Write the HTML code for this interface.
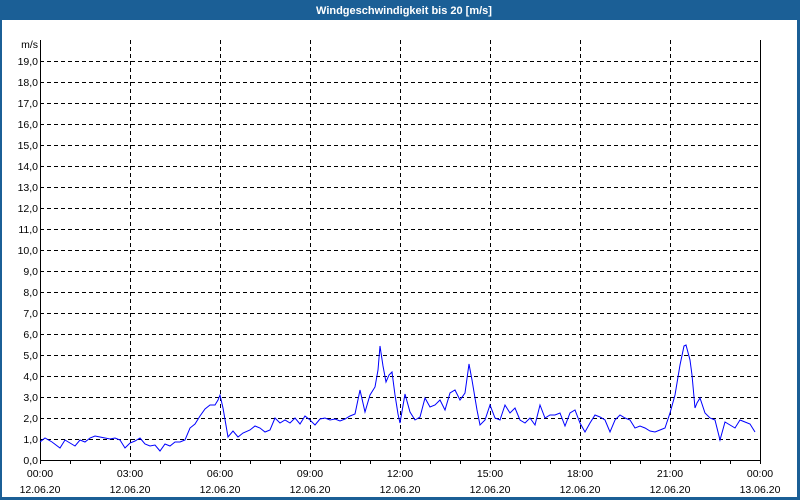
<!DOCTYPE html>
<html><head><meta charset="utf-8"><style>
html,body{margin:0;padding:0;background:#fff;}
body{width:800px;height:500px;overflow:hidden;position:relative;font-family:"Liberation Sans",sans-serif;}
</style></head><body>
<svg width="800" height="500" xmlns="http://www.w3.org/2000/svg" style="position:absolute;left:0;top:0" font-family="Liberation Sans, sans-serif" font-size="10.5">
<rect x="0" y="0" width="800" height="500" fill="#fff"/>
<rect x="0" y="0" width="800" height="20" fill="#1b5f96"/>
<rect x="0" y="0" width="2" height="500" fill="#1b5f96"/>
<rect x="797" y="0" width="3" height="500" fill="#1b5f96"/>
<rect x="0" y="497" width="800" height="3" fill="#1b5f96"/>
<text x="404" y="14" fill="#fff" font-weight="bold" font-size="11" text-anchor="middle">Windgeschwindigkeit bis 20 [m/s]</text>
<g stroke="#000" stroke-width="1" stroke-dasharray="4,3" shape-rendering="crispEdges">
<path d="M40 61.5H760M40 82.5H760M40 103.5H760M40 124.5H760M40 145.5H760M40 166.5H760M40 187.5H760M40 208.5H760M40 229.5H760M40 250.5H760M40 271.5H760M40 292.5H760M40 313.5H760M40 334.5H760M40 355.5H760M40 376.5H760M40 397.5H760M40 418.5H760M40 439.5H760"/>
<path d="M130.5 40V460M220.5 40V460M310.5 40V460M400.5 40V460M490.5 40V460M580.5 40V460M670.5 40V460"/>
</g>
<g stroke="#000" stroke-width="1" fill="none" shape-rendering="crispEdges">
<path d="M40.5 40V460.5H760.5V40"/>
<path d="M40.5 460V464M70.5 460V464M100.5 460V464M130.5 460V464M160.5 460V464M190.5 460V464M220.5 460V464M250.5 460V464M280.5 460V464M310.5 460V464M340.5 460V464M370.5 460V464M400.5 460V464M430.5 460V464M460.5 460V464M490.5 460V464M520.5 460V464M550.5 460V464M580.5 460V464M610.5 460V464M640.5 460V464M670.5 460V464M700.5 460V464M730.5 460V464M760.5 460V464"/>
</g>
<g fill="#000" text-anchor="end">
<text x="38" y="48">m/s</text>
<text x="38" y="65">19,0</text><text x="38" y="86">18,0</text><text x="38" y="107">17,0</text><text x="38" y="128">16,0</text><text x="38" y="149">15,0</text><text x="38" y="170">14,0</text><text x="38" y="191">13,0</text><text x="38" y="212">12,0</text><text x="38" y="233">11,0</text><text x="38" y="254">10,0</text><text x="38" y="275">9,0</text><text x="38" y="296">8,0</text><text x="38" y="317">7,0</text><text x="38" y="338">6,0</text><text x="38" y="359">5,0</text><text x="38" y="380">4,0</text><text x="38" y="401">3,0</text><text x="38" y="422">2,0</text><text x="38" y="443">1,0</text><text x="38" y="464">0,0</text>
</g>
<g fill="#000" text-anchor="middle">
<text x="40" y="477">00:00</text><text x="40" y="493">12.06.20</text>
<text x="130" y="477">03:00</text><text x="130" y="493">12.06.20</text>
<text x="220" y="477">06:00</text><text x="220" y="493">12.06.20</text>
<text x="310" y="477">09:00</text><text x="310" y="493">12.06.20</text>
<text x="400" y="477">12:00</text><text x="400" y="493">12.06.20</text>
<text x="490" y="477">15:00</text><text x="490" y="493">12.06.20</text>
<text x="580" y="477">18:00</text><text x="580" y="493">12.06.20</text>
<text x="670" y="477">21:00</text><text x="670" y="493">12.06.20</text>
<text x="760" y="477">00:00</text><text x="760" y="493">13.06.20</text>
</g>
<polyline fill="none" stroke="#0000ff" stroke-width="1" points="40,442 45,438 52,442 60,448 65,440 70,443 75,446 80,440 85,442 90,438 95,436 100,437 105,438 110,439 115,438 120,440 125,448 130,443 135,441 140,438 145,444 150,446 155,445 160,451 165,444 170,446 175,442 180,442 185,440 190,428 195,424 200,416 205,409 210,405 215,405 218,400 220,395 223,408 228,437 233,431 238,437 243,433 250,430 255,426 260,428 265,432 270,430 275,418 280,423 285,420 290,423 295,418 300,424 305,416 310,420 315,425 320,419 325,418 330,420 335,419 340,421 345,419 350,416 355,414 360,390 365,412 370,395 375,387 378,370 380,346 383,366 386,382 389,375 392,372 395,395 398,414 400,423 405,394 410,412 415,420 420,417 425,398 430,407 435,405 440,400 445,410 450,393 455,390 460,400 465,393 469,364 472,380 477,410 480,425 485,420 490,405 495,418 500,420 505,405 510,413 515,408 520,420 525,423 530,418 535,425 540,405 545,418 550,415 555,415 560,413 565,426 570,413 575,410 580,423 585,432 590,423 595,415 600,417 605,420 610,432 615,420 620,415 625,418 630,420 635,428 640,426 645,428 650,431 655,432 660,430 665,428 670,413 675,395 680,365 684,346 686,345 690,360 692,375 695,408 697,403 700,398 705,413 710,418 715,420 720,440 725,422 730,425 735,428 740,420 745,422 750,424 755,432"/>
</svg>
</body></html>
